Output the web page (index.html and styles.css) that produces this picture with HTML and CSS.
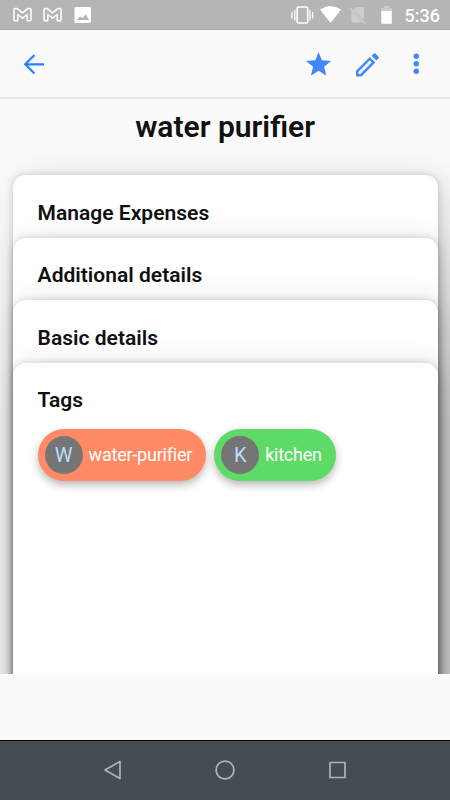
FILE: index.html
```html
<!DOCTYPE html>
<html lang="en">
<head>
<meta charset="utf-8">
<title>water purifier</title>
<link rel="stylesheet" href="styles.css">
</head>
<body>
<div class="screen">
  <div class="status">
    <svg width="450" height="30" viewBox="0 0 450 30" fill="none">
      <g id="mail" stroke="#fff" stroke-width="1.500" stroke-linejoin="round">
        <path d="M14 9.500Q14 8.600 15 8.600H17.200L22.500 12.800 27.800 8.600H30Q31 8.600 31 9.500V19.800Q31 20.800 30 20.800H27.200V14.500L22.500 18.200 17.800 14.500V20.800H15Q14 20.800 14 19.800Z"/>
      </g>
      <use href="#mail" x="30"/>
      <rect x="74.500" y="7" width="16.500" height="16" rx="1.800" fill="#fff"/>
      <path d="M77 20l3.200-3.800 2.300 2 3.200-3.900 3.500 5.700z" fill="#b5b5b5"/>
      <rect x="297.200" y="7" width="10.500" height="16" rx="1.300" stroke="#fff" stroke-width="1.600"/>
      <path d="M292 12v6.500M294.800 10v10.500M310 10v10.500M312.600 12v6.500" stroke="#fff" stroke-width="1.200"/>
      <path d="M320 9.500Q330.500 2.500 341 9.500L330.600 23Z" fill="#fff"/>
      <path d="M356 7h7q1 0 1 1v12L353.300 9.500zM351.300 11L362.500 22.500h-10.200q-1 0-1-1z" fill="#cdcdcd"/>
      <path d="M350 8.200L365.500 23.600" stroke="#cdcdcd" stroke-width="1.500"/>
      <path d="M384 6h5v2.300h3V12h-11V8.300h3z" fill="#ccc"/>
      <path d="M381.300 11h10.500v12.800h-10.500z" fill="#fff"/>
    </svg>
    <span class="clock">5:36</span>
  </div>
  <header class="bar">
    <svg width="450" height="67" viewBox="0 30 450 67" fill="none">
      <path d="M44 64.300H25.500M34.500 55L25.200 64.300 34.500 73.500" stroke="#2681ff" stroke-width="2.200"/>
      <path d="M318.600 51.900l3.300 8.300 9.200.8-7 5.700 2.200 9-7.700-4.900-7.700 4.900 2.200-9-7-5.700 9.200-.8z" fill="#3f87fb"/>
      <path d="M357.200 75.200V71.300L369.800 58.600 373.600 62.400 361 75.200Z" stroke="#4289f7" stroke-width="2.400"/>
      <path d="M371.600 55.800l2-2q1-1 2 0l2.800 2.800q1 1 0 2l-2 2z" fill="#4289f7"/>
      <g fill="#3f87fb"><circle cx="416.300" cy="56.200" r="2.700"/><circle cx="416.300" cy="63.800" r="2.700"/><circle cx="416.300" cy="71.300" r="2.700"/></g>
    </svg>
  </header>
  <main class="content">
    <h1>water purifier</h1>
    <section class="card"><h2>Manage Expenses</h2></section>
    <section class="card"><h2>Additional details</h2></section>
    <section class="card"><h2>Basic details</h2></section>
    <section class="card"><h2>Tags</h2>
      <div class="chips">
        <div class="chip orange"><span class="avatar">W</span><span>water-purifier</span></div>
        <div class="chip green"><span class="avatar">K</span><span>kitchen</span></div>
      </div>
    </section>
  </main>
  <nav class="nav">
    <svg width="450" height="59" viewBox="0 741 450 59" fill="none" stroke="#b0b3b6" stroke-width="1.700" stroke-linejoin="round">
      <path d="M120 761.500V778.500L105 770Z"/><circle cx="225" cy="770" r="8.900"/><rect x="330" y="762.500" width="15" height="15"/>
    </svg>
  </nav>
</div>
</body>
</html>
```
FILE: styles.css
```css
* { box-sizing: border-box; }
body { margin: 0; background: #fafafa; font-family: Roboto, sans-serif; color: #111; }
.screen { width: 450px; height: 800px; display: flex; flex-direction: column; overflow: hidden; }
svg { display: block; }
.status { height: 30px; background: #b5b5b5; border-bottom: 1px solid #a6a6a6; position: relative; flex: none; }
.clock { position: absolute; right: 10px; top: 5px; font-size: 18px; line-height: 21px; font-weight: 500; color: #fff; }
.bar { height: 69px; flex: none; border-bottom: 2px solid #e8e8e8; }
.content { height: 575px; flex: none; overflow: hidden; padding: 0 12.4px 0 12.6px; }
h1 { margin: 9px 0 0; height: 67px; font-size: 30px; line-height: 38px; font-weight: 600; text-align: center; }
.card {
  height: 700px; margin-bottom: -637.5px; padding: 25.6px 25px; border-radius: 12.5px; background: #fff; position: relative;
  box-shadow: 0 0 7px rgba(0,0,0,.17), 7px 7px 34px rgba(0,0,0,.17);
}
h2 { margin: 0; font-size: 21px; line-height: 25px; font-weight: 600; letter-spacing: .02px; }
.chips { display: flex; gap: 8px; margin-top: 15.8px; }
.chip { height: 52px; border-radius: 26px; padding: 0 14px 0 7px; display: flex; align-items: center; gap: 6px; font-size: 18px; letter-spacing: -.22px; color: #fff; box-shadow: 0 4px 8px rgba(0,0,0,.28); }
.avatar { width: 38px; height: 38px; border-radius: 50%; background: #757575; color: #b9dcfb; font-size: 20px; display: flex; align-items: center; justify-content: center; }
.orange { background: #ff8a65; }
.green { background: #5ddb66; }
.nav { margin-top: auto; height: 60px; flex: none; background: #464d52; border-top: 1px solid #000; }
```
